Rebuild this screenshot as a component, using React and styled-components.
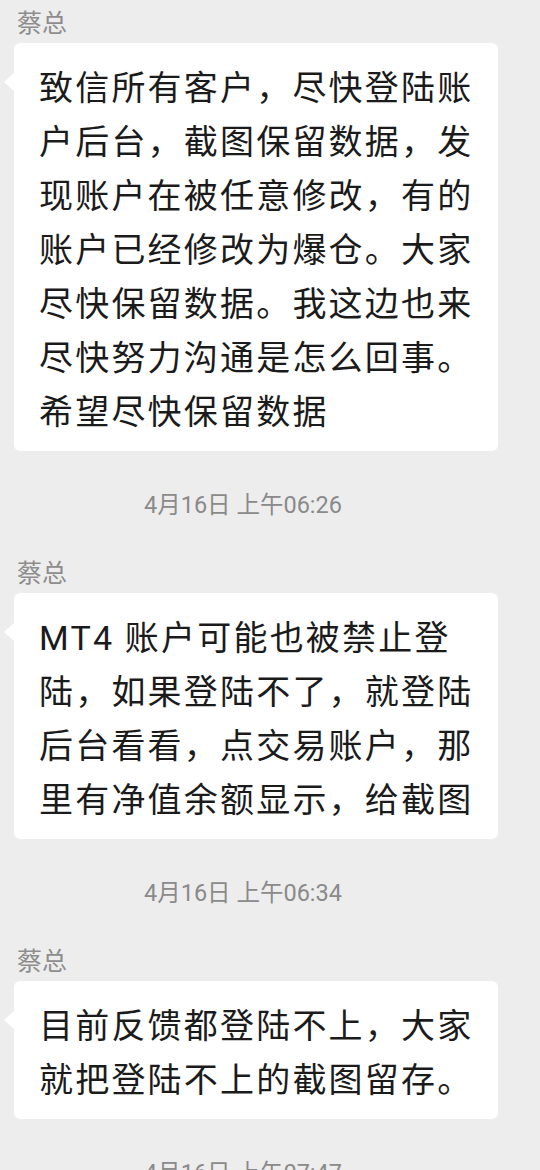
import React from "react";
import styled, { createGlobalStyle } from "styled-components";

const messages = [
  {
    name: "蔡总",
    text: "致信所有客户，尽快登陆账户后台，截图保留数据，发现账户在被任意修改，有的账户已经修改为爆仓。大家尽快保留数据。我这边也来尽快努力沟通是怎么回事。希望尽快保留数据",
    time: "4月16日 上午06:26",
  },
  {
    name: "蔡总",
    text: "MT4 账户可能也被禁止登陆，如果登陆不了，就登陆后台看看，点交易账户，那里有净值余额显示，给截图",
    time: "4月16日 上午06:34",
  },
  {
    name: "蔡总",
    text: "目前反馈都登陆不上，大家就把登陆不上的截图留存。",
    time: "4月16日 上午07:47",
  },
];

const ChatScreen = () => {
  return (
    <>
      <GlobalStyle />
      <StyledChat>
        {messages.map((m, i) => (
          <React.Fragment key={i}>
            <StyledMessage>
              <StyledName>{m.name}</StyledName>
              <StyledBubble>{m.text}</StyledBubble>
            </StyledMessage>
            <StyledTime>{m.time}</StyledTime>
          </React.Fragment>
        ))}
      </StyledChat>
    </>
  );
};

//Styles
const GlobalStyle = createGlobalStyle`
  html, body {
    margin: 0;
    padding: 0;
    background: #ededed;
    overflow: hidden;
  }
  body {
    font-family: Roboto, "Noto Sans CJK SC", sans-serif;
  }
`;

const StyledChat = styled.div`
  width: 540px;
  height: 1170px;
  overflow: hidden;
  padding: 9px 0 0 14px;
  box-sizing: border-box;
  background: #ededed;
`;

const StyledMessage = styled.div`
  display: flex;
  flex-direction: column;
  align-items: flex-start;
`;

const StyledName = styled.div`
  margin-left: 3px;
  font-size: 25px;
  line-height: 30px;
  color: #8d8d8d;
  margin-bottom: 4px;
`;

const StyledBubble = styled.div`
  position: relative;
  box-sizing: border-box;
  width: 484px;
  padding: 18px 20px 12px 25px;
  background: #ffffff;
  border-radius: 6px;
  font-size: 34px;
  line-height: 54px;
  letter-spacing: 2.2px;
  color: #1b1b1b;
  word-break: break-all;

  &::before {
    content: "";
    position: absolute;
    left: -10px;
    top: 30px;
    width: 0;
    height: 0;
    border-top: 9px solid transparent;
    border-bottom: 9px solid transparent;
    border-right: 10px solid #ffffff;
  }
`;

const StyledTime = styled.div`
  margin: 39px 0;
  padding-right: 68px;
  text-align: center;
  font-size: 23.5px;
  line-height: 30px;
  color: #8a8a8a;
`;

export default ChatScreen;
